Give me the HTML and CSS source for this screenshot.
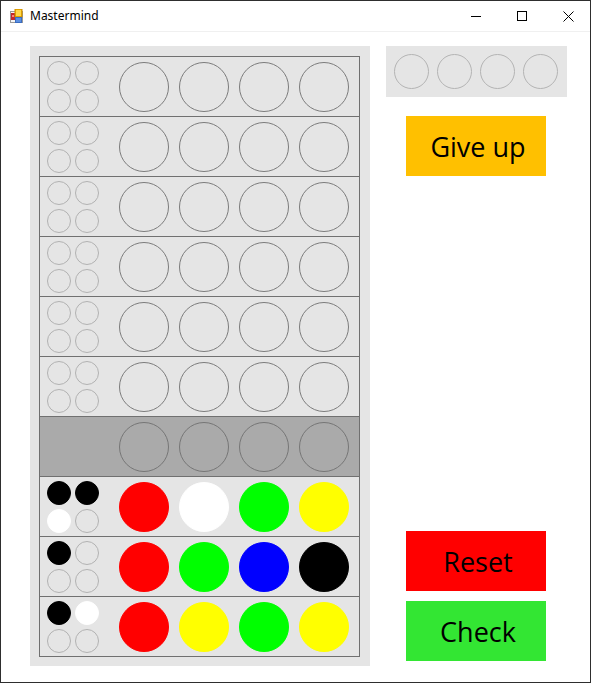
FILE: index.html
```html
<!DOCTYPE html>
<html>
<head>
<meta charset="utf-8">
<title>Mastermind</title>
<link rel="stylesheet" href="styles.css">
</head>
<body>
<div class="window">
  <div class="titlebar">
    <svg class="app-icon" width="13" height="14" viewBox="0 0 13 14">
      <rect x="0.5" y="2.5" width="12" height="11" fill="#f4f4f4" stroke="#9a9a9a"/>
      <rect x="1" y="4" width="4" height="7" fill="#c0282d"/>
      <rect x="2" y="6" width="2" height="2" fill="#ff8080"/>
      <rect x="5" y="0" width="7" height="8" fill="#f4b400" stroke="#c98a00" stroke-width="1"/>
      <rect x="6" y="1" width="5" height="6" fill="#ffd84a"/>
      <rect x="5.5" y="8.5" width="6" height="5" fill="#5b8fe0" stroke="#3a6cc0"/>
    </svg>
    <span class="title">Mastermind</span>
    <div class="controls">
      <span class="ctl"><svg width="10" height="10" viewBox="0 0 10 10"><path d="M0 5.5H10" stroke="#000" stroke-width="1"/></svg></span>
      <span class="ctl"><svg width="10" height="10" viewBox="0 0 10 10"><rect x="0.5" y="0.5" width="9" height="9" fill="none" stroke="#000"/></svg></span>
      <span class="ctl"><svg width="11" height="11" viewBox="0 0 11 11"><path d="M0.5 0.5L10.5 10.5M10.5 0.5L0.5 10.5" stroke="#000" stroke-width="1"/></svg></span>
    </div>
  </div>
  <div class="client">
    <div class="board-panel">
      <div class="board">
        <div class="row">
          <div class="hints"><span class="hint"></span><span class="hint"></span><span class="hint"></span><span class="hint"></span></div>
          <div class="pegs"><span class="peg"></span><span class="peg"></span><span class="peg"></span><span class="peg"></span></div>
        </div>
        <div class="row">
          <div class="hints"><span class="hint"></span><span class="hint"></span><span class="hint"></span><span class="hint"></span></div>
          <div class="pegs"><span class="peg"></span><span class="peg"></span><span class="peg"></span><span class="peg"></span></div>
        </div>
        <div class="row">
          <div class="hints"><span class="hint"></span><span class="hint"></span><span class="hint"></span><span class="hint"></span></div>
          <div class="pegs"><span class="peg"></span><span class="peg"></span><span class="peg"></span><span class="peg"></span></div>
        </div>
        <div class="row">
          <div class="hints"><span class="hint"></span><span class="hint"></span><span class="hint"></span><span class="hint"></span></div>
          <div class="pegs"><span class="peg"></span><span class="peg"></span><span class="peg"></span><span class="peg"></span></div>
        </div>
        <div class="row">
          <div class="hints"><span class="hint"></span><span class="hint"></span><span class="hint"></span><span class="hint"></span></div>
          <div class="pegs"><span class="peg"></span><span class="peg"></span><span class="peg"></span><span class="peg"></span></div>
        </div>
        <div class="row">
          <div class="hints"><span class="hint"></span><span class="hint"></span><span class="hint"></span><span class="hint"></span></div>
          <div class="pegs"><span class="peg"></span><span class="peg"></span><span class="peg"></span><span class="peg"></span></div>
        </div>
        <div class="row active">
          <div class="hints hidden"></div>
          <div class="pegs"><span class="peg"></span><span class="peg"></span><span class="peg"></span><span class="peg"></span></div>
        </div>
        <div class="row">
          <div class="hints"><span class="hint black"></span><span class="hint black"></span><span class="hint white"></span><span class="hint"></span></div>
          <div class="pegs"><span class="peg red"></span><span class="peg white"></span><span class="peg green"></span><span class="peg yellow"></span></div>
        </div>
        <div class="row">
          <div class="hints"><span class="hint black"></span><span class="hint"></span><span class="hint"></span><span class="hint"></span></div>
          <div class="pegs"><span class="peg red"></span><span class="peg green"></span><span class="peg blue"></span><span class="peg black"></span></div>
        </div>
        <div class="row">
          <div class="hints"><span class="hint black"></span><span class="hint white"></span><span class="hint"></span><span class="hint"></span></div>
          <div class="pegs"><span class="peg red"></span><span class="peg yellow"></span><span class="peg green"></span><span class="peg yellow"></span></div>
        </div>
      </div>
    </div>
    <div class="side">
      <div class="secret">
        <span class="secret-peg"></span><span class="secret-peg"></span><span class="secret-peg"></span><span class="secret-peg"></span>
      </div>
      <div class="btn giveup">Give up</div>
      <div class="btn reset">Reset</div>
      <div class="btn check">Check</div>
    </div>
  </div>
</div>
</body>
</html>
```

FILE: styles.css
```css
html, body {
  margin: 0;
  padding: 0;
  background: #ffffff;
}

.window {
  box-sizing: border-box;
  width: 591px;
  height: 683px;
  border: 1px solid #2e2e2e;
  background: #ffffff;
  display: flex;
  flex-direction: column;
  overflow: hidden;
}

.titlebar {
  height: 30px;
  border-bottom: 1px solid #f0f0f0;
  display: flex;
  align-items: center;
  font-family: "Noto Sans", "DejaVu Sans", sans-serif;
  font-size: 12px;
  color: #000;
}

.app-icon {
  margin-left: 9px;
  margin-top: -1px;
}

.title {
  margin-left: 7px;
  margin-top: -1px;
}

.controls {
  margin-left: auto;
  display: flex;
  align-items: center;
  height: 100%;
}

.ctl {
  width: 46px;
  height: 100%;
  display: flex;
  align-items: center;
  justify-content: center;
}

.ctl:last-child {
  width: 46px;
  margin-right: -1px;
}

.client {
  flex: 1;
  display: flex;
  padding: 14px 0 0 29px;
}

.board-panel {
  width: 340px;
  height: 620px;
  box-sizing: border-box;
  background: #e5e5e5;
  padding: 10px 10px 9px 9px;
}

.board {
  border: 1px solid #707070;
  border-bottom: none;
  width: 321px;
  box-sizing: border-box;
}

.row {
  height: 59px;
  border-bottom: 1px solid #707070;
  display: flex;
  align-items: center;
  padding-left: 7px;
}

.row.active {
  background: #aaaaaa;
}

.hints {
  width: 52px;
  display: grid;
  grid-template-columns: 24px 24px;
  grid-template-rows: 24px 24px;
  gap: 4px;
  margin-top: 1px;
}

.hints.hidden {
  height: 52px;
}

.hint {
  box-sizing: border-box;
  width: 24px;
  height: 24px;
  border-radius: 50%;
  border: 1px solid #b2b2b2;
}

.pegs {
  display: flex;
  gap: 10px;
  margin-left: 20px;
}

.peg {
  box-sizing: border-box;
  width: 50px;
  height: 50px;
  border-radius: 50%;
  border: 1px solid #7c7c7c;
}

.active .peg {
  border-color: #767676;
}

.hint.black, .peg.black { background: #000000; border-color: #000000; }
.hint.white, .peg.white { background: #ffffff; border-color: #ffffff; }
.peg.red { background: #ff0000; border-color: #ff0000; }
.peg.green { background: #00ff00; border-color: #00ff00; }
.peg.blue { background: #0000ff; border-color: #0000ff; }
.peg.yellow { background: #ffff00; border-color: #ffff00; }

.side {
  width: 181px;
  height: 615px;
  margin-left: 16px;
  display: flex;
  flex-direction: column;
}

.secret {
  height: 51px;
  box-sizing: border-box;
  background: #e5e5e5;
  display: flex;
  align-items: center;
  gap: 8px;
  padding-left: 8px;
}

.secret-peg {
  box-sizing: border-box;
  width: 35px;
  height: 35px;
  border-radius: 50%;
  border: 1px solid #b4b4b4;
}

.btn {
  width: 140px;
  height: 60px;
  margin-left: 20px;
  display: flex;
  align-items: center;
  justify-content: center;
  padding-left: 4px;
  box-sizing: border-box;
  font-family: "Open Sans", "Noto Sans", sans-serif;
  font-size: 27px;
  color: #000;
}

.giveup {
  background: #ffc000;
  margin-top: 19px;
}

.reset {
  background: #ff0000;
  margin-top: auto;
}

.check {
  background: #33e633;
  margin-top: 10px;
}
```
